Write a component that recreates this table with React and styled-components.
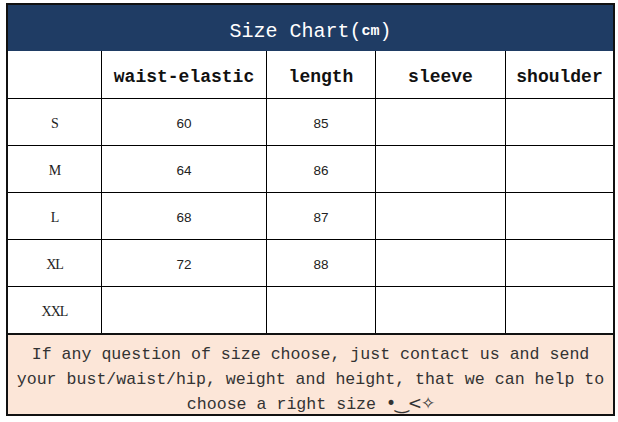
import React from 'react';
import styled, { createGlobalStyle } from 'styled-components';

const GlobalStyle = createGlobalStyle`
  body {
    margin: 0;
    background: #fff;
  }
`;

const S_Frame = styled.div`
  margin: 3px 0 0 6px;
  width: 605px;
  border: 2px solid #111;
  background: #fff;`;

const S_Title = styled.div`
  height: 46px;
  background-color: #1f3c64;
  color: #fff;
  display: flex;
  align-items: center;
  justify-content: center;
  font-family: "Liberation Mono", monospace;
  font-size: 20px;
  padding-top: 6px;
  box-sizing: border-box;`;

const S_Unit = styled.span`
  font-size: 15px;
  font-weight: bold;`;

const S_Grid = styled.div`
  display: grid;
  grid-template-columns: 93px 164px 108px 129px 107px;
  grid-template-rows: 47px repeat(5, 46px);
  gap: 1px;
  background-color: #000;`;

const S_Cell = styled.div`
  background-color: #fff;
  display: flex;
  align-items: center;
  justify-content: center;
  padding-top: 3px;
  box-sizing: border-box;
  color: #222;
  font-family: ${p => p.kind === 'size' ? '"Liberation Serif", serif' : '"Liberation Sans", sans-serif'};
  font-size: ${p => p.kind === 'size' ? '14px' : '13.5px'};
  letter-spacing: ${p => p.kind === 'size' ? '-1px' : '0'};`;

const S_Label = styled(S_Cell)`
  font-family: "Liberation Mono", monospace;
  font-size: 18px;
  font-weight: bold;
  color: #111;
  padding-top: 5px;`;

const S_Note = styled.div`
  border-top: 2px solid #111;
  background-color: #fce6d8;
  height: 81px;
  padding-top: 7px;
  box-sizing: border-box;
  text-align: center;
  font-family: "Liberation Mono", monospace;
  font-size: 16.6px;
  line-height: 25px;
  color: #333;
  white-space: nowrap;`;

const S_Face = styled.span`
  font-family: "DejaVu Sans", sans-serif;
  font-size: 17px;
  line-height: 1;
  letter-spacing: -1px;`;

const headers = ['', 'waist-elastic', 'length', 'sleeve', 'shoulder'];

const rows = [
  ['S', '60', '85'],
  ['M', '64', '86'],
  ['L', '68', '87'],
  ['XL', '72', '88'],
  ['XXL', '', ''],
];

const App = () => {
  return (
    <>
      <GlobalStyle />
      <S_Frame>
        <S_Title>Size Chart(<S_Unit>cm</S_Unit>)</S_Title>
        <S_Grid>
          {headers.map((h, i) => <S_Label key={'h' + i}>{h}</S_Label>)}
          {rows.map(r => (
            <React.Fragment key={r[0]}>
              <S_Cell kind="size">{r[0]}</S_Cell>
              <S_Cell>{r[1]}</S_Cell>
              <S_Cell>{r[2]}</S_Cell>
              <S_Cell></S_Cell>
              <S_Cell></S_Cell>
            </React.Fragment>
          ))}
        </S_Grid>
        <S_Note>
          If any question of size choose, just contact us and send<br />
          your bust/waist/hip, weight and height, that we can help to<br />
          choose a right size <S_Face>•‿&lt;✧</S_Face>
        </S_Note>
      </S_Frame>
    </>
  );
};

export default App;
